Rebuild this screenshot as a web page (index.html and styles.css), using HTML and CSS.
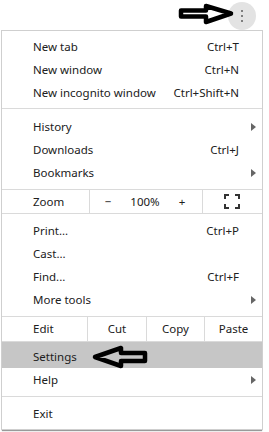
FILE: index.html
```html
<!DOCTYPE html>
<html lang="en">
<head>
    <meta charset="UTF-8">
    <meta name="viewport" content="width=device-width, initial-scale=1.0">
    <title>Menu</title>
    <link rel="stylesheet" href="styles.css">
</head>
<body>
    <div class="top">
        <div class="kebab"><span></span><span></span><span></span></div>
    </div>
    <!-- pointer arrows drawn over the screenshot -->
    <svg class="arrow arrow-top" width="60" height="26" viewBox="178 2 60 26">
        <polygon points="181,10.5 206,10.5 206,6 231,13.5 206,22 206,16.5 181,16.5"/>
    </svg>
    <div class="menu">
        <div class="group g1">
            <div class="item"><span class="label">New tab</span><span class="key">Ctrl+T</span></div>
            <div class="item"><span class="label">New window</span><span class="key">Ctrl+N</span></div>
            <div class="item"><span class="label">New incognito window</span><span class="key">Ctrl+Shift+N</span></div>
        </div>
        <div class="group g2">
            <div class="item"><span class="label">History</span><span class="sub"></span></div>
            <div class="item"><span class="label">Downloads</span><span class="key">Ctrl+J</span></div>
            <div class="item"><span class="label">Bookmarks</span><span class="sub"></span></div>
        </div>
        <div class="zoom">
            <div class="cell first">Zoom</div>
            <div class="cell mid"><span>&minus;</span><span>100%</span><span>+</span></div>
            <div class="cell full">
                <svg width="16" height="15" viewBox="0 0 16 15">
                    <path d="M1 5V1h4M11 1h4v4M15 10v4h-4M5 14H1v-4"/>
                </svg>
            </div>
        </div>
        <div class="group g3">
            <div class="item"><span class="label">Print...</span><span class="key">Ctrl+P</span></div>
            <div class="item"><span class="label">Cast...</span></div>
            <div class="item"><span class="label">Find...</span><span class="key">Ctrl+F</span></div>
            <div class="item"><span class="label">More tools</span><span class="sub"></span></div>
        </div>
        <div class="edit">
            <div class="cell first">Edit</div>
            <div class="cell cut">Cut</div>
            <div class="cell copy">Copy</div>
            <div class="cell paste">Paste</div>
        </div>
        <div class="group g4">
            <div class="item active"><span class="label">Settings</span></div>
            <div class="item"><span class="label">Help</span><span class="sub"></span></div>
        </div>
        <div class="group g5">
            <div class="item"><span class="label">Exit</span></div>
        </div>
    </div>
    <svg class="arrow arrow-set" width="58" height="26" viewBox="92 344 58 26">
        <polygon points="95,357 121,348 121,353 145,353 145,361 121,361 121,366"/>
    </svg>
</body>
</html>
```

FILE: styles.css
```css
body{
    margin: 0;
    padding: 0;
    background: #fff;
    font-family: "Noto Sans", "Open Sans", sans-serif;
    font-size: 11.5px;
    color: #202020;
    position: relative;
    width: 269px;
    height: 432px;
    overflow: hidden;
}
.top{
    height: 30px;
    display: flex;
    justify-content: flex-end;
}
.kebab{
    width: 28px;
    height: 28px;
    margin-top: 2px;
    margin-right: 13px;
    border-radius: 50%;
    background: #e3e3e3;
    display: flex;
    flex-direction: column;
    align-items: center;
    justify-content: center;
    gap: 2.5px;
}
.kebab span{
    width: 2.5px;
    height: 2.5px;
    border-radius: 50%;
    background: #5c5c5c;
}
.arrow{
    position: absolute;
}
.arrow polygon{
    fill: none;
    stroke: #000;
    stroke-width: 4.5;
    stroke-linejoin: round;
}
.arrow-top{
    left: 178px;
    top: 2px;
}
.arrow-top polygon{
    fill: #fff;
}
.arrow-set{
    left: 92px;
    top: 344px;
}
.menu{
    margin-left: 1px;
    width: 262px;
    box-sizing: border-box;
    border: 1px solid #cfcfcf;
    background: #fff;
    box-shadow: 0 2px 1px -1px #9a9a9a;
}
.group{
    border-bottom: 1px solid #dadada;
}
.g1{ padding: 4px 0 4px; }
.g2{ padding: 6px 0 5px; }
.g3{ padding: 5px 0 5px; }
.g4{ padding: 0 0 5px; }
.g5{ padding: 5px 0 4px; border-bottom: none; }
.item{
    display: flex;
    align-items: center;
    height: 23px;
    line-height: 23px;
    padding-left: 31px;
}
.item .label{
    flex: 1;
}
.item .key{
    margin-right: 23px;
}
.item .sub{
    width: 23px;
    align-self: stretch;
    position: relative;
}
.item .sub::after{
    content: "";
    position: absolute;
    left: 12px;
    top: 8px;
    border-left: 5px solid #666;
    border-top: 4px solid transparent;
    border-bottom: 4px solid transparent;
}
.item.active{
    background: #c6c6c6;
    height: 26px;
    padding-top: 3px;
    box-sizing: border-box;
    line-height: 23px;
    align-items: flex-start;
}
.zoom,
.edit{
    display: flex;
    border-bottom: 1px solid #dadada;
}
.zoom{
    height: 23px;
    line-height: 23px;
}
.edit{
    height: 24px;
    line-height: 23px;
}
.cell{
    box-sizing: border-box;
    border-right: 1px solid #dadada;
}
.cell.first{
    padding-left: 31px;
}
.zoom .first{ width: 88px; }
.zoom .mid{
    width: 113px;
    display: grid;
    grid-template-columns: 36px 38px 36px;
    text-align: center;
}
.zoom .full{
    flex: 1;
    border-right: none;
    display: flex;
    align-items: center;
    justify-content: center;
    padding-right: 2px;
}
.zoom .full path{
    fill: none;
    stroke: #333;
    stroke-width: 2;
}
.edit .cell{ text-align: center; }
.edit .first{ width: 86px; text-align: left; }
.edit .cut{ width: 59px; }
.edit .copy{ width: 58px; }
.edit .paste{ flex: 1; border-right: none; }
```
